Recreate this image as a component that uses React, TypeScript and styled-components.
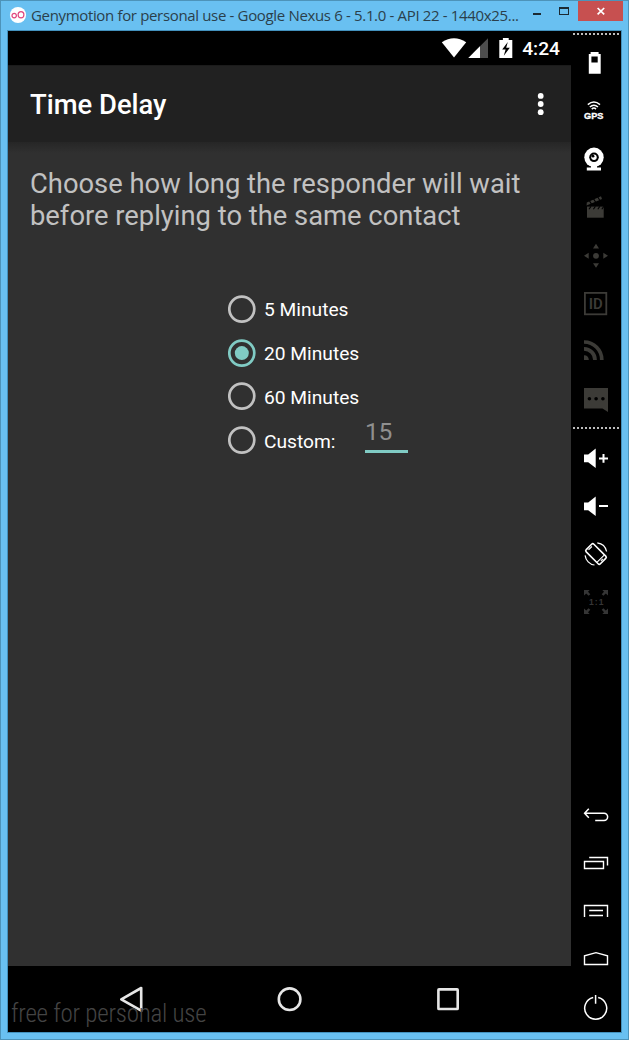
import React from "react";
import styled, { createGlobalStyle } from "styled-components";

const Global = createGlobalStyle`
  * { box-sizing: border-box; }
  body { margin: 0; background: #69c0f1; }
`;

const Window = styled.div`
  width: 629px;
  height: 1040px;
  display: flex;
  flex-direction: column;
  background: #69c0f1;
  border: 1px solid #4d93b9;
  padding: 0 6px 6px;
  overflow: hidden;
`;

const TitleBar = styled.header`
  height: 29px;
  flex: none;
  display: flex;
  align-items: flex-start;
  padding-left: 2px;
`;

const Logo = styled.svg`
  width: 18px;
  height: 18px;
  margin-top: 5px;
  flex: none;
`;

const WindowTitle = styled.div`
  margin: 3px 0 0 4px;
  width: 494px;
  font: 15px/22px "Open Sans", sans-serif;
  letter-spacing: -0.34px;
  color: #2b3f4b;
  white-space: nowrap;
`;

const Controls = styled.svg`
  width: 50px;
  height: 20px;
  flex: none;
`;

const CloseButton = styled.div`
  width: 45px;
  height: 20px;
  margin-left: auto;
  margin-right: -1px;
  background: #c75050;
  display: flex;
  align-items: center;
  justify-content: center;
`;

const Body = styled.div`
  flex: 1;
  display: flex;
  border: 1px solid #4391bd;
  background: #000;
`;

const Screen = styled.main`
  position: relative;
  width: 563px;
  display: flex;
  flex-direction: column;
  font-family: Roboto, sans-serif;
  background: #303030;
`;

const StatusBar = styled.div`
  height: 34px;
  flex: none;
  background: #000;
  display: flex;
  align-items: center;
  justify-content: flex-end;
  padding-right: 11px;
`;

const StatusIcons = styled.svg`
  width: 74px;
  height: 34px;
`;

const Clock = styled.span`
  font-size: 19.2px;
  line-height: 22px;
  font-weight: 500;
  color: #fff;
  margin-left: 8px;
  padding-top: 2px;
`;

const AppBar = styled.div`
  height: 77px;
  flex: none;
  background: #212121;
  border-top: 1px solid #1b1b1b;
  display: flex;
  align-items: center;
  justify-content: space-between;
  padding: 2px 25px 0 22px;
`;

const AppTitle = styled.h1`
  margin: 0;
  font-size: 27.4px;
  line-height: 32px;
  font-weight: 500;
  color: #fff;
`;

const Overflow = styled.svg`
  width: 12px;
  height: 28px;
`;

const Content = styled.section`
  flex: 1;
  background: linear-gradient(#262626, #303030 11px);
  padding: 26px 22px 0;
`;

const Prompt = styled.p`
  margin: 0;
  font-size: 27.37px;
  line-height: 32px;
  color: #c1c1c1;
  white-space: nowrap;
`;

const Options = styled.div`
  margin: 55px 0 0 198px;
  display: flex;
  flex-direction: column;
`;

const Option = styled.div`
  height: 43.8px;
  display: flex;
  align-items: center;
`;

const RadioSvg = styled.svg`
  width: 28px;
  height: 28px;
  flex: none;
`;

const RadioMark = ({ on }: { on?: boolean }) => (
  <RadioSvg viewBox="0 0 28 28">
    <circle cx="13.8" cy="14.1" r="12.5" fill="none" stroke={on ? "#80cbc4" : "#c1c1c1"} strokeWidth="2.7" />
    {on && <circle cx="13.8" cy="14.1" r="7" fill="#80cbc4" />}
  </RadioSvg>
);

const OptionLabel = styled.span`
  margin-left: 8px;
  padding-top: 3px;
  width: 101px;
  font-size: 19.2px;
  line-height: 22px;
  color: #fff;
  white-space: nowrap;
`;

const CustomValue = styled.span`
  width: 43px;
  height: 38px;
  border-bottom: 3px solid #80cbc4;
  margin-top: -13px;
  font-size: 24.6px;
  line-height: 34px;
  letter-spacing: -0.3px;
  color: #8f8f8f;
`;

const NavBar = styled.nav`
  height: 66px;
  flex: none;
  background: #000;
`;

const Watermark = styled.div`
  position: absolute;
  left: 3px;
  bottom: 3px;
  font-size: 25px;
  line-height: 30px;
  font-weight: 300;
  font-stretch: 75%;
  letter-spacing: -0.23px;
  color: #444;
  white-space: nowrap;
`;

const Sidebar = styled.aside`
  width: 50px;
  display: flex;
  flex-direction: column;
`;

const Dots = styled.div`
  height: 2px;
  flex: none;
  margin: 2px 1px 0 2px;
  background: repeating-linear-gradient(90deg, #bdbdbd 0 2px, transparent 2px 4px);
`;

const ToolGroup = styled.div<{ $top: number }>`
  display: flex;
  flex-direction: column;
  padding-top: ${(p) => p.$top}px;
`;

const Tool = styled.div`
  height: 48px;
  display: flex;
  align-items: center;
  justify-content: center;
`;

const ToolIcon = styled.svg<{ $dim?: boolean }>`
  width: 30px;
  height: 30px;
  color: ${(p) => (p.$dim ? "#3c3b37" : "#fff")};
  fill: currentColor;
`;

const Icon = ({ dim, children }: { dim?: boolean; children: React.ReactNode }) => (
  <Tool>
    <ToolIcon $dim={dim} viewBox="-15 -15 30 30">{children}</ToolIcon>
  </Tool>
);

const line = { fill: "none", stroke: "currentColor" } as const;

export default function App() {
  return (
    <>
      <Global />
      <Window>
        <TitleBar>
          <Logo viewBox="0 0 18 18">
            <circle cx="9" cy="9" r="8.1" fill="#fff" />
            <g fill="none" stroke="#e0487f" strokeWidth="1.2">
              <circle cx="5.2" cy="9.6" r="2.2" />
              <ellipse cx="12" cy="8.8" rx="2.9" ry="3.1" />
            </g>
          </Logo>
          <WindowTitle>Genymotion for personal use - Google Nexus 6 - 5.1.0 - API 22 - 1440x25...</WindowTitle>
          <Controls viewBox="525 1 50 20">
            <rect x="533" y="13" width="8" height="2" fill="#1c2a33" />
            <path d="M559 7h10v8h-10z M560 9v5h8v-5z" fill="#1c2a33" fillRule="evenodd" />
          </Controls>
          <CloseButton>
            <svg width="10" height="10" viewBox="0 0 10 10">
              <path d="M1.6 2l6.6 6.4M8.2 2L1.6 8.4" stroke="#fff" strokeWidth="1.7" />
            </svg>
          </CloseButton>
        </TitleBar>
        <Body>
          <Screen>
            <StatusBar>
              <StatusIcons viewBox="440 31 74 34">
                <path d="M441.8 42.2Q454 34.4 466.2 42.2L454 57.5z" fill="#fff" />
                <path d="M488 38.3V58h-19.7z" fill="#4d4d4d" />
                <path d="M480 46.3V58h-11.7z" fill="#fff" />
                <path d="M499.3 40h3.6v-2h5.8v2h3.6v18h-13z" fill="#fff" />
                <path d="M507.8 42l-5.6 7.6h3.4l-1.8 6.2 6-8h-3.6z" fill="#000" />
              </StatusIcons>
              <Clock>4:24</Clock>
            </StatusBar>
            <AppBar>
              <AppTitle>Time Delay</AppTitle>
              <Overflow viewBox="0 0 12 28">
                <g fill="#fff">
                  <circle cx="6.7" cy="4.9" r="2.9" />
                  <circle cx="6.7" cy="13" r="2.9" />
                  <circle cx="6.7" cy="21.2" r="2.9" />
                </g>
              </Overflow>
            </AppBar>
            <Content>
              <Prompt>
                Choose how long the responder will wait
                <br />
                before replying to the same contact
              </Prompt>
              <Options>
                <Option><RadioMark /><OptionLabel>5 Minutes</OptionLabel></Option>
                <Option><RadioMark on /><OptionLabel>20 Minutes</OptionLabel></Option>
                <Option><RadioMark /><OptionLabel>60 Minutes</OptionLabel></Option>
                <Option>
                  <RadioMark />
                  <OptionLabel>Custom:</OptionLabel>
                  <CustomValue>15</CustomValue>
                </Option>
              </Options>
            </Content>
            <NavBar>
              <svg width="563" height="66" viewBox="8 966 563 66" fill="none" stroke="#e6e6e6" strokeWidth="2.6" strokeLinejoin="round">
                <path d="M121.3 999.3L141.2 988V1010.7z" />
                <circle cx="289.6" cy="999.2" r="10.8" />
                <rect x="438.4" y="989.4" width="19.3" height="19.6" rx="0.6" />
              </svg>
            </NavBar>
            <Watermark>free for personal use</Watermark>
          </Screen>
          <Sidebar>
            <Dots />
            <ToolGroup $top={4}>
              <Icon>
                <path fillRule="evenodd" d="M-7.2-9h1.8v-2h8v2h2.1v19.7H-7.2z M-4.6-6.6v6h6.3v-6z" />
              </Icon>
              <Icon>
                <g {...line} strokeWidth="1.5">
                  <path d="M-8.2-6.4Q-2.1-11.4 4-6.4" />
                  <path d="M-6.2-4Q-2.1-7.6 2-4" />
                  <path d="M-4.2-1.9Q-2.1-4 0-1.9" />
                </g>
                <text x="-12" y="7.8" fontFamily="Liberation Sans, sans-serif" fontWeight="700" fontSize="8.4" textLength="19.4" lengthAdjust="spacingAndGlyphs" stroke="currentColor" strokeWidth="0.3">GPS</text>
              </Icon>
              <Icon>
                <circle cx="-2" cy="-1.7" r="9.7" />
                <path d="M-5 6.5h6v2h4v3H-9.2v-3H-5z" />
                <circle cx="-2" cy="-1.7" r="4.8" fill="#000" />
                <circle cx="-2" cy="-1.7" r="2.7" />
                <circle cx="-3" cy="-2.8" r="1.4" fill="#000" />
              </Icon>
              <Icon dim>
                <rect x="-9" y="-0.4" width="16.7" height="11.1" />
                <path d="M-7 2.2l2-2.8M-2.6 2.2l2-2.8M1.8 2.2l2-2.8M5.8 2.2l2-2.8" stroke="#000" strokeWidth="1.1" />
                <path d="M-9.4-1.5L-9.2-4.6 5-10.8 6-8z" />
                <path d="M-6.8-6.6l2.6 4.2M-2.6-8.4l2.6 4.2M1.6-10.2l2.6 4.2" stroke="#000" strokeWidth="1.1" />
              </Icon>
              <Icon dim>
                <g transform="translate(0 .8)">
                  <circle r="2.9" />
                  <path d="M0-12l3 4.6h-6zM0 12l3-4.6h-6zM-12 0l4.7-3v6zM12 0L7.3-3v6z" />
                </g>
              </Icon>
              <Icon dim>
                <rect x="-11.1" y="-10.1" width="21.4" height="21.4" {...line} strokeWidth="1.8" />
                <text x="-7.2" y="6.2" fontFamily="Roboto, sans-serif" fontWeight="600" fontSize="15" textLength="14" lengthAdjust="spacingAndGlyphs">ID</text>
              </Icon>
              <Icon dim>
                <g {...line} strokeWidth="3.7">
                  <path d="M-12-9A17.8 17.8 0 0 1 5.8 9" />
                  <path d="M-12-2.1A11 11 0 0 1-1 9" />
                </g>
                <path d="M-12 4.2A5 5 0 0 1-7.2 9H-12z" />
              </Icon>
              <Icon dim>
                <path d="M-12-11h24v24l-5.5-3.4H-12z" />
                <g fill="#000">
                  <circle cx="-6.6" cy="-0.3" r="1.8" />
                  <circle cx="0.1" cy="-0.3" r="1.8" />
                  <circle cx="6.9" cy="-0.3" r="1.8" />
                </g>
              </Icon>
            </ToolGroup>
            <ToolGroup $top={2}>
              <Dots />
            </ToolGroup>
            <ToolGroup $top={5}>
              <Icon>
                <path d="M-12-3.5h4.2L-.3-9.5V10L-7.8 4.2H-12z" />
                <path d="M3 .4h9M7.5-4v8.8" {...line} strokeWidth="2" />
              </Icon>
              <Icon>
                <path d="M-12-3.5h4.2L-.3-9.5V10L-7.8 4.2H-12z" />
                <path d="M3 0h9" {...line} strokeWidth="2" />
              </Icon>
              <Icon>
                <g transform="rotate(-45)" {...line}>
                  <rect x="-5.4" y="-10" width="10.8" height="20" rx="1.6" strokeWidth="1.6" />
                  <path d="M-5 6.6h10M-1.4 8.3h2.8M-2.4-8.2h4.8" strokeWidth="1.1" />
                </g>
                <path d="M1.3-11.2A11 11 0 0 1 10.6-2.5M-10.9 1.4A11 11 0 0 0-1.5 11" {...line} strokeWidth="1.2" />
              </Icon>
              <Icon dim>
                <g fill="#353535">
                  <path d="M-12-12h5.7l-1.7 1.8 2.3 2.4-1.7 1.6-2.4-2.4L-12-6.5z" />
                  <path d="M12-12H6.3L8-10.2 5.7-7.8l1.7 1.6 2.4-2.4L12-6.5z" />
                  <path d="M-12 12h5.7L-8 10.2l2.3-2.4-1.7-1.6-2.4 2.4L-12 6.5z" />
                  <path d="M12 12H6.3L8 10.2 5.7 7.8l1.7-1.6 2.4 2.4L12 6.5z" />
                  <text x="-7" y="3.2" fontFamily="Liberation Sans, sans-serif" fontWeight="700" fontSize="8.5" textLength="14.5">1:1</text>
                </g>
              </Icon>
            </ToolGroup>
            <ToolGroup $top={165}>
              <Icon>
                <path d="M-7.2-6.3l-4.2 4.5 4.2 4.5M-11.4-1.8H8A3.65 3.65 0 0 1 8 5.5H-.8" {...line} strokeWidth="1.5" />
              </Icon>
              <Icon>
                <path d="M-11.5-1.5H7.5v7h-19zM-6.8-5.5H11.5V2.4" {...line} strokeWidth="1.4" />
              </Icon>
              <Icon>
                <path d="M-11.5 6V-5.5h23V6M-6.8-.5H7M-6.8 4.5H7" {...line} strokeWidth="1.4" />
              </Icon>
              <Icon>
                <path d="M-11.5 5.5v-8.6L0-6.3l11.5 3.2v8.6z" {...line} strokeWidth="1.4" />
              </Icon>
              <Icon>
                <path d="M-2.8-9.5A11 11 0 1 0 2.2-9.5M-.4-12V-3.3" {...line} strokeWidth="1.5" />
              </Icon>
            </ToolGroup>
          </Sidebar>
        </Body>
      </Window>
    </>
  );
}
